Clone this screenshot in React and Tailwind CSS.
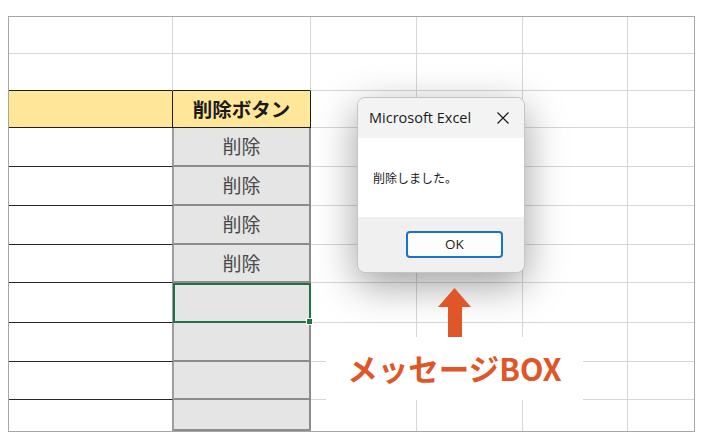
import React from 'react';

const cols = ['w-[164px]', 'w-[138px]', 'w-[106px]', 'w-[106px]', 'w-[105px]', 'w-[66px]'];
const rowHeights = ['h-[37px]', 'h-[37px]', 'h-[37px]', 'h-[39px]', 'h-[39px]', 'h-[39px]', 'h-[38px]', 'h-[40px]', 'h-[39px]', 'h-[38px]', 'h-[31px]'];
const jp = { fontFamily: '"Noto Sans CJK JP", "Noto Sans", sans-serif' };

function LeftCell({ row }) {
    if (row < 2) {
        return <div className={`${cols[0]} h-full border-r border-[#d6d6d6] ${row === 1 ? 'border-b border-b-[#1f1f1f]' : 'border-b border-[#d6d6d6]'}`} />;
    }
    if (row === 2) {
        return <div className={`${cols[0]} h-full bg-[#ffe699] border-r border-b border-[#1f1f1f]`} />;
    }
    const last = row === rowHeights.length - 1;
    return <div className={`${cols[0]} h-full bg-white border-r border-r-[#9a9a9a] ${last ? '' : 'border-b border-b-[#262626]'}`} />;
}

function ButtonCell({ row }) {
    if (row < 2) {
        return <div className={`${cols[1]} h-full border-r border-[#d6d6d6] ${row === 1 ? 'border-b border-b-[#1f1f1f]' : 'border-b border-[#d6d6d6]'}`} />;
    }
    if (row === 2) {
        return (
            <div className={`${cols[1]} h-full bg-[#ffe699] border-r border-b border-[#1f1f1f] flex items-center justify-center text-[19.5px] font-bold text-[#1a1a1a]`} style={jp}>
                削除ボタン
            </div>
        );
    }
    const label = row <= 6 ? '削除' : '';
    if (row === 7) {
        return (
            <div className={`${cols[1]} h-full relative bg-[#e5e5e5] border-2 border-[#217346]`}>
                <div className="absolute -right-[4px] -bottom-[4px] w-[7px] h-[7px] bg-[#217346] border border-white" />
            </div>
        );
    }
    return (
        <div className={`${cols[1]} h-full bg-[#e5e5e5] border-l border-l-[#a0a0a0] border-r-2 border-b-2 border-[#8c8c8c] flex items-center justify-center text-[19px] text-[#4a4a4a]`} style={jp}>
            {label}
        </div>
    );
}

function Dialog() {
    return (
        <div className="absolute left-[357px] top-[97px] w-[168px] h-[176px] rounded-[8px] overflow-hidden border border-[#c4c4c4] bg-[#f0f0f0] shadow-[0_12px_40px_rgba(0,0,0,0.38)] flex flex-col">
            <div className="h-[40px] bg-[#f3f3f3] flex items-center justify-between pl-[11px] pr-[12px]">
                <span className="text-[14.5px] text-[#1a1a1a]" style={{ fontFamily: '"Open Sans", "Noto Sans", sans-serif' }}>Microsoft Excel</span>
                <svg width="14" height="14" viewBox="0 0 14 14" className="mr-[2px]">
                    <path d="M1.5 1.5 L12.5 12.5 M12.5 1.5 L1.5 12.5" stroke="#1a1a1a" strokeWidth="1.2" fill="none" />
                </svg>
            </div>
            <div className="h-[79px] bg-white flex items-center pl-[15px] text-[12px] text-[#1a1a1a]" style={jp}>
                削除しました。
            </div>
            <div className="flex-1 flex justify-end items-start pt-[14px] pr-[21px]">
                <button className="w-[97px] h-[27px] rounded-[4px] border-2 border-[#1a73c8] bg-[#fdfdfd] text-[13.5px] text-[#1a1a1a] flex items-center justify-center" style={{ fontFamily: '"Open Sans", "Noto Sans", sans-serif' }}>
                    OK
                </button>
            </div>
        </div>
    );
}

function Callout() {
    return (
        <>
            <svg className="absolute left-[437px] top-[287px]" width="35" height="52" viewBox="0 0 35 52">
                <polygon points="17.5,1 34,20 25,20 25,52 11,52 11,20 1,20" fill="#df5628" />
            </svg>
            <div className="absolute left-[326px] top-[337px] w-[257px] h-[63px] bg-white flex items-center justify-center">
                <span className="text-[30.5px] font-bold text-[#df5628]" style={jp}>メッセージBOX</span>
            </div>
        </>
    );
}

export default function App() {
    return (
        <div className="relative w-[714px] h-[446px] bg-white overflow-hidden">
            <div className="absolute left-[8px] top-[16px] border border-[#a6a6a6]">
                {rowHeights.map((h, r) => (
                    <div key={r} className={`flex ${h}`}>
                        <LeftCell row={r} />
                        <ButtonCell row={r} />
                        {cols.slice(2).map((w, c) => (
                            <div key={c} className={`${w} h-full ${c < 3 ? 'border-r' : ''} ${r < rowHeights.length - 1 ? 'border-b' : ''} border-[#d6d6d6]`} />
                        ))}
                    </div>
                ))}
            </div>
            <Dialog />
            <Callout />
        </div>
    );
}
